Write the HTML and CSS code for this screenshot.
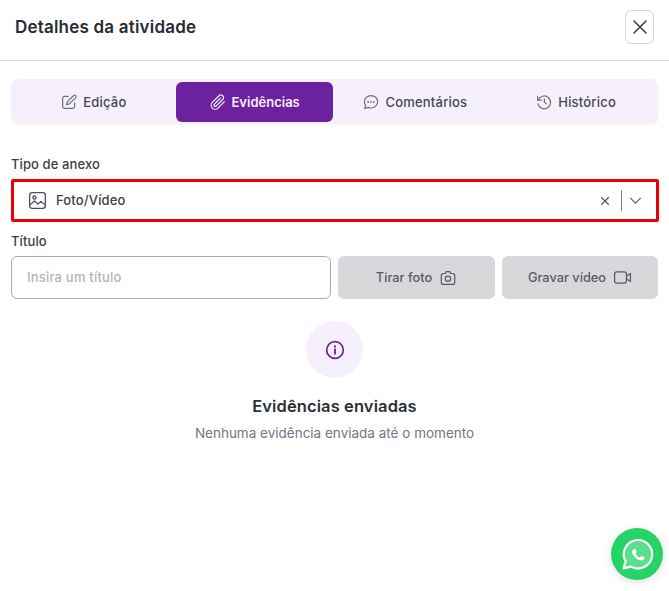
FILE: index.html
```html
<!DOCTYPE html>
<html lang="pt-BR">
<head>
    <meta charset="utf-8">
    <title>Detalhes da atividade</title>
    <link rel="stylesheet" href="styles.css">
</head>
<body>
    <div class="modal">
        <div class="modal-header">
            <h2>Detalhes da atividade</h2>
            <button class="close-btn" type="button" aria-label="Fechar">
                <svg width="16" height="16" viewBox="0 0 16 16"><path d="M2 2l12 12M14 2L2 14" fill="none" stroke="#374151" stroke-width="1.6" stroke-linecap="round"/></svg>
            </button>
        </div>

        <div class="modal-body">
            <div class="tabs">
                <div class="tab">
                    <svg class="icon" viewBox="0 0 24 24"><path d="M11 4.5H6a2.5 2.5 0 0 0-2.5 2.5v11A2.5 2.5 0 0 0 6 20.500h11a2.500 2.500 0 0 0 2.500-2.500v-5"/><path d="M18.200 3.300a2 2 0 0 1 2.800 2.800L12.500 14.600l-3.800 1 1-3.800z"/></svg>
                    <span>Edição</span>
                </div>
                <div class="tab active">
                    <svg class="icon" viewBox="0 0 24 24"><path d="M20.500 11.500l-8.600 8.600a5.300 5.300 0 0 1-7.500-7.500l8.900-8.900a3.500 3.500 0 0 1 5 5l-8.900 8.900a1.800 1.800 0 0 1-2.500-2.500l8.100-8.100"/></svg>
                    <span>Evidências</span>
                </div>
                <div class="tab">
                    <svg class="icon" viewBox="0 0 24 24"><path d="M12 3.500c-4.900 0-8.800 3.600-8.800 8 0 1.700.6 3.300 1.600 4.600L3.500 20.500l4.700-1.300c1.100.5 2.400.8 3.800.8 4.900 0 8.800-3.700 8.800-8.500s-3.900-8-8.800-8z"/><path class="dots" d="M8.200 12h.01M12 12h.01M15.800 12h.01"/></svg>
                    <span>Comentários</span>
                </div>
                <div class="tab">
                    <svg class="icon" viewBox="0 0 24 24"><path d="M4.300 9.500A8.500 8.500 0 1 1 4 14.500"/><path d="M3.500 4.500v5h5"/><path d="M12.500 8v4.500l3 2"/></svg>
                    <span>Histórico</span>
                </div>
            </div>

            <div class="field-label first">Tipo de anexo</div>
            <div class="select-box">
                <svg class="select-icon" viewBox="0 0 24 24"><rect x="3" y="3" width="18" height="18" rx="3"/><circle cx="8.500" cy="8.500" r="1.800"/><path d="M3.500 17l5-4.500 4 3.500 3.500-3 4.500 4"/></svg>
                <span class="select-value">Foto/Vídeo</span>
                <svg class="clear-icon" viewBox="0 0 12 12"><path d="M1.500 1.500l9 9M10.500 1.500l-9 9"/></svg>
                <span class="select-sep"></span>
                <svg class="caret-icon" viewBox="0 0 14 8"><path d="M1 1l6 6 6-6"/></svg>
            </div>

            <div class="field-label second">Título</div>
            <div class="title-row">
                <input class="title-input" type="text" placeholder="Insira um título">
                <button class="action-btn" type="button">
                    Tirar foto
                    <svg class="icon" viewBox="0 0 24 24"><path d="M8.500 6l1-2.500h5l1 2.500H18a3 3 0 0 1 3 3v8.500a3 3 0 0 1-3 3H6a3 3 0 0 1-3-3V9a3 3 0 0 1 3-3z"/><circle cx="12" cy="13" r="3.500"/></svg>
                </button>
                <button class="action-btn" type="button">
                    Gravar vídeo
                    <svg class="icon video" viewBox="0 0 24 24"><rect x="2" y="5" width="15" height="14" rx="3"/><path d="M17 10.500l5-3.500v10l-5-3.500"/></svg>
                </button>
            </div>

            <div class="empty">
                <div class="empty-circle">
                    <svg width="20" height="20" viewBox="0 0 24 24"><circle cx="12" cy="12" r="10" fill="none" stroke="#6b21a0" stroke-width="2"/><path d="M12 11v5.500" stroke="#6b21a0" stroke-width="2.200" stroke-linecap="round"/><circle cx="12" cy="7.700" r="1.300" fill="#6b21a0"/></svg>
                </div>
                <div class="empty-title">Evidências enviadas</div>
                <div class="empty-text">Nenhuma evidência enviada até o momento</div>
            </div>
        </div>
    </div>

    <div class="whatsapp">
        <svg width="37" height="37" viewBox="0 0 32 32"><path d="M4 28l1.700-6.200A12.300 12.300 0 1 1 10.400 26.500z" fill="rgba(255,255,255,0.26)" stroke="#fff" stroke-width="1.900" stroke-linejoin="round"/><path transform="translate(16.500 16) scale(.72) translate(-16.800 -16)" d="M12.200 9.500c-.4 0-1 .2-1.400.7-.6.600-1.200 1.500-1.200 2.800 0 1.800 1.300 3.500 1.500 3.800.2.200 2.600 4 6.300 5.400 3 1.100 3.700.9 4.400.8.700-.1 2.200-.9 2.500-1.800.3-.9.300-1.600.2-1.800-.1-.2-.3-.2-.7-.4l-2.500-1.200c-.3-.1-.6-.2-.8.200l-1.200 1.400c-.2.300-.4.300-.8.100-2-.9-3.400-2.100-4.700-4.200-.2-.4 0-.6.200-.8l.9-1.200c.1-.3.100-.5 0-.7l-1.100-2.700c-.3-.6-.5-.6-.8-.6z" fill="#fff"/></svg>
    </div>
</body>
</html>
```

FILE: styles.css
```css
* {
  box-sizing: border-box;
}

body {
  margin: 0;
  height: 591px;
  overflow: hidden;
  background-color: #ffffff;
  font-family: Inter, "Open Sans", sans-serif;
  color: #343a46;
}

.modal-header {
  display: flex;
  align-items: center;
  justify-content: space-between;
  height: 61px;
  padding: 0 15px 6px 15px;
  border-bottom: 1px solid #d9d9dc;
}

.modal-header h2 {
  margin: 0;
  font-size: 17px;
  font-weight: 600;
  letter-spacing: 0.2px;
  color: #272b33;
}

.close-btn {
  display: flex;
  align-items: center;
  justify-content: center;
  width: 29px;
  height: 34px;
  padding: 0;
  background: #ffffff;
  border: 1px solid #d5d7dc;
  border-radius: 6px;
}

.modal-body {
  padding: 18px 11px 0 11px;
}

.tabs {
  display: grid;
  grid-template-columns: repeat(4, 1fr);
  gap: 4px;
  height: 45px;
  padding: 3px 4px 2px 4px;
  background-color: #f6f0fc;
  border-radius: 7px;
  box-shadow: 0 1px 2px rgba(0, 0, 0, 0.05);
}

.tab {
  display: flex;
  align-items: center;
  justify-content: center;
  gap: 5px;
  padding-bottom: 1px;
  font-size: 13px;
  font-weight: 500;
  letter-spacing: 0.2px;
  color: #434854;
  border-radius: 6px;
}

.tab.active {
  background-color: #6b21a0;
  color: #f6f0fc;
  font-weight: 600;
  letter-spacing: 0;
}

.icon {
  width: 18px;
  height: 18px;
  fill: none;
  stroke: #6a6f7b;
  stroke-width: 1.600;
  stroke-linecap: round;
  stroke-linejoin: round;
}

.tab.active .icon {
  stroke: #f6f0fc;
}

.dots {
  stroke-width: 2.400;
}

.field-label {
  font-size: 13px;
  font-weight: 500;
  line-height: 18px;
  letter-spacing: 0.1px;
  color: #3c414c;
}

.field-label.first {
  margin-top: 31px;
}

.field-label.second {
  margin-top: 10px;
}

.select-box {
  display: flex;
  align-items: center;
  height: 43px;
  margin: 6px -1px 0 0;
  padding: 0 14px 0 13px;
  border: 3px solid #ee0000;
  border-radius: 2px;
}

.select-icon {
  width: 21px;
  height: 21px;
  fill: none;
  stroke: #4b505b;
  stroke-width: 1.500;
  stroke-linejoin: round;
}

.select-value {
  flex: 1;
  margin-left: 8px;
  padding-bottom: 2px;
  font-size: 13px;
  font-weight: 500;
  letter-spacing: 0.15px;
  color: #3c414c;
}

.clear-icon {
  width: 10px;
  height: 10px;
  fill: none;
  stroke: #4b505b;
  stroke-width: 1.300;
}

.select-sep {
  width: 1px;
  height: 21px;
  margin: 0 7px 0 11px;
  background-color: #7e838d;
}

.caret-icon {
  width: 13px;
  height: 7px;
  fill: none;
  stroke: #6a6f7b;
  stroke-width: 1.600;
}

.title-row {
  display: grid;
  grid-template-columns: 320px 157px 156px;
  gap: 7px;
  margin-top: 6px;
}

.title-input {
  height: 43px;
  padding: 0 15px 2px 15px;
  font-family: inherit;
  font-size: 13px;
  font-weight: 500;
  letter-spacing: 0.2px;
  border: 1px solid #a9adb5;
  border-radius: 6px;
  outline: none;
}

.title-input::placeholder {
  color: #b0b4bc;
}

.action-btn {
  display: flex;
  align-items: center;
  justify-content: center;
  gap: 7px;
  height: 43px;
  padding: 0;
  font-family: inherit;
  font-size: 12.800px;
  font-weight: 500;
  color: #565b67;
  background-color: #d8d8da;
  border: 1px solid #d3d8e2;
  border-radius: 6px;
}

.action-btn .icon {
  stroke: #565b67;
}

.action-btn .video {
  width: 19px;
  height: 19px;
}

.empty {
  display: flex;
  flex-direction: column;
  align-items: center;
  margin-top: 22px;
}

.empty-circle {
  display: flex;
  align-items: center;
  justify-content: center;
  width: 57px;
  height: 57px;
  background-color: #f6f0fc;
  border-radius: 50%;
}

.empty-title {
  margin-top: 18px;
  font-size: 16.500px;
  font-weight: 600;
  line-height: 20px;
  letter-spacing: 0.1px;
  color: #2b2f37;
}

.empty-text {
  margin-top: 8px;
  font-size: 13.500px;
  line-height: 18px;
  color: #717681;
}

.whatsapp {
  position: fixed;
  left: 611px;
  top: 528px;
  display: flex;
  align-items: center;
  justify-content: center;
  width: 52px;
  height: 52px;
  background-color: #25d366;
  border-radius: 50%;
  box-shadow: 0 2px 8px rgba(0, 0, 0, 0.12);
}
```
